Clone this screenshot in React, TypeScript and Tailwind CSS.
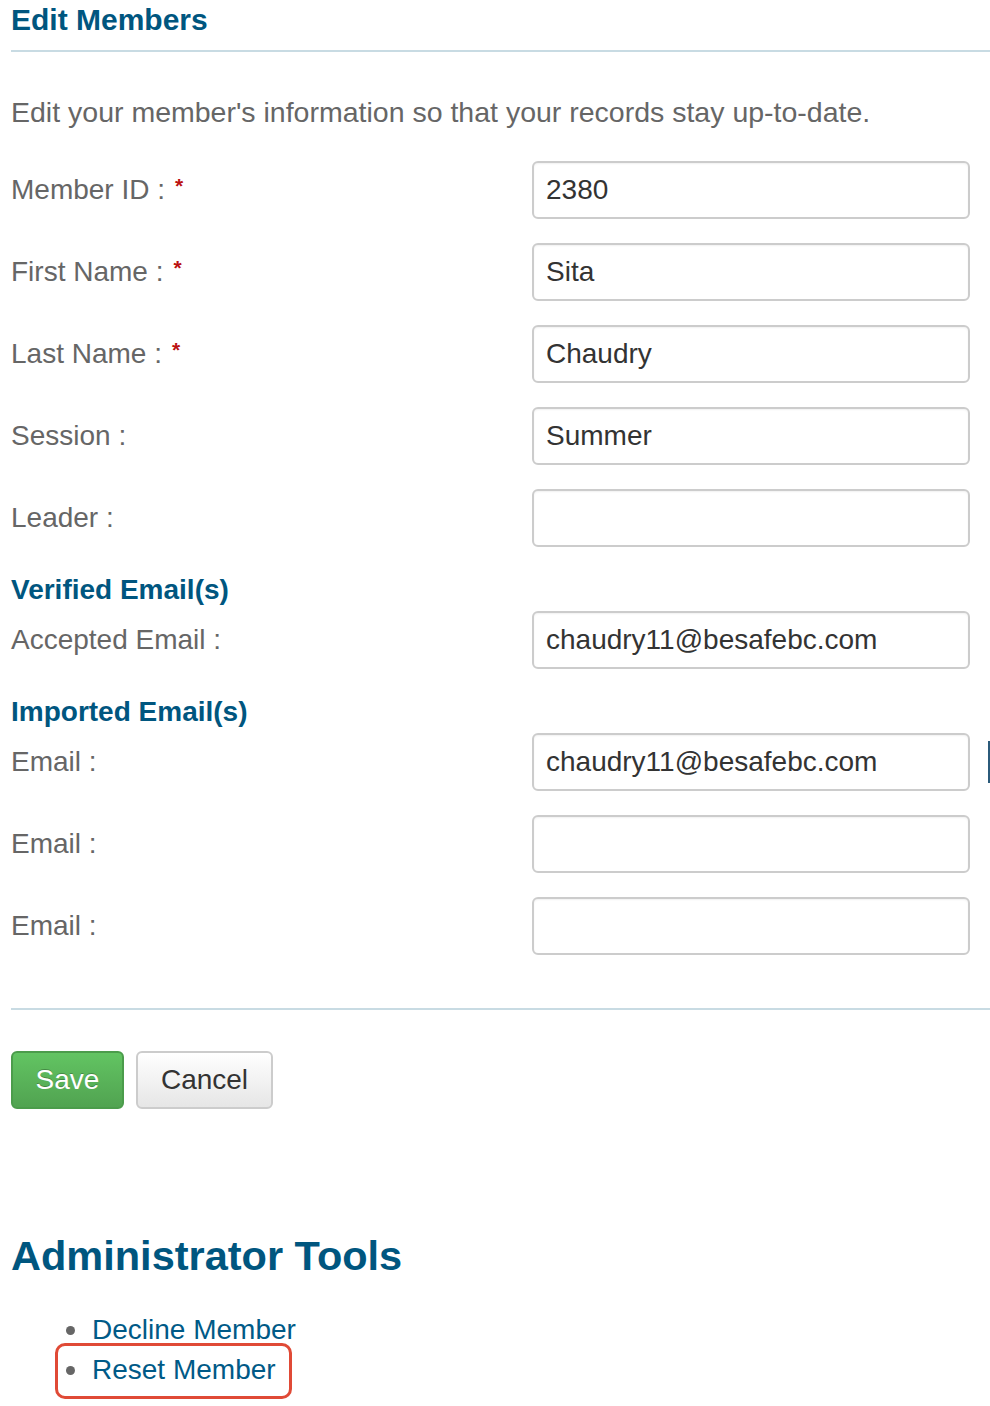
import React from 'react';

const font = { fontFamily: '"Liberation Sans", Arial, Helvetica, sans-serif' };

interface FieldProps {
    label: string;
    value?: string;
    required?: boolean;
    edge?: boolean; // partially visible element at the right border
}

function Field({ label, value = '', required, edge }: FieldProps) {
    return (
        <div className="flex items-center h-[58px]">
            <div className="w-[521px] text-[28px] leading-[36px] text-[#666666]">
                {label} :
                {required && <span className="text-[#bb1111] text-[21px] font-bold align-top relative top-[-4px] ml-[10px]">*</span>}
            </div>
            <input
                readOnly
                value={value}
                className="w-[438px] h-[58px] rounded-[6px] border-2 border-[#cccccc] bg-white px-[12px] text-[28px] text-[#333333] shadow-[inset_0_1px_2px_rgba(0,0,0,0.06)] outline-none"
                style={font}
            />
            <div className="w-[20px] h-full flex items-center justify-end">
                {edge && <div className="w-[2px] h-[42px] bg-[#2b5a7a]" />}
            </div>
        </div>
    );
}

function SectionTitle({ children }: { children: React.ReactNode }) {
    return <h3 className="text-[28px] leading-[36px] font-bold text-[#00567f]">{children}</h3>;
}

export default function App() {
    return (
        <div className="w-[990px] min-h-[1406px] bg-white pl-[11px]" style={font}>
            <h1 className="text-[30px] leading-[40px] font-bold text-[#00567f] pb-[10px] border-b-2 border-[#c8dbe3]">
                Edit Members
            </h1>

            <p className="mt-[42px] text-[28.5px] leading-[36px] text-[#666666]">
                Edit your member's information so that your records stay up-to-date.
            </p>

            <div className="mt-[31px] flex flex-col gap-[24px]">
                <Field label="Member ID" value="2380" required />
                <Field label="First Name" value="Sita" required />
                <Field label="Last Name" value="Chaudry" required />
                <Field label="Session" value="Summer" />
                <Field label="Leader" />
            </div>

            <div className="mt-[25px]">
                <SectionTitle>Verified Email(s)</SectionTitle>
            </div>
            <div className="mt-[3px]">
                <Field label="Accepted Email" value="chaudry11@besafebc.com" />
            </div>

            <div className="mt-[25px]">
                <SectionTitle>Imported Email(s)</SectionTitle>
            </div>
            <div className="mt-[3px] flex flex-col gap-[24px]">
                <Field label="Email" value="chaudry11@besafebc.com" edge />
                <Field label="Email" />
                <Field label="Email" />
            </div>

            <div className="mt-[53px] border-t-2 border-[#c8dbe3]" />

            <div className="mt-[41px] flex gap-[12px]">
                <button
                    className="w-[113px] h-[58px] rounded-[6px] border-2 border-[#4b9c4b] bg-gradient-to-b from-[#62c462] to-[#51a351] text-white text-[28px] [text-shadow:0_-1px_0_rgba(0,0,0,0.25)]"
                    style={font}
                >
                    Save
                </button>
                <button
                    className="w-[137px] h-[58px] rounded-[6px] border-2 border-[#cccccc] bg-gradient-to-b from-[#ffffff] to-[#e6e6e6] text-[#333333] text-[28px]"
                    style={font}
                >
                    Cancel
                </button>
            </div>

            <h2 className="mt-[122px] text-[41.5px] leading-[50px] font-bold text-[#00567f]">Administrator Tools</h2>

            <ul className="mt-[29px] ml-[55px]">
                <li className="flex items-center h-[40px]">
                    <span className="w-[9px] h-[9px] rounded-full bg-[#666666] mr-[17px]" />
                    <a className="text-[28px] text-[#005a87]">Decline Member</a>
                </li>
                <li className="relative flex items-center h-[40px]">
                    <span className="w-[9px] h-[9px] rounded-full bg-[#666666] mr-[17px]" />
                    <a className="text-[28px] text-[#005a87]">Reset Member</a>
                    <div className="absolute left-[-11px] top-[-7px] w-[237px] h-[56px] rounded-[10px] border-[3px] border-[#e04a36]" />
                </li>
            </ul>
        </div>
    );
}
